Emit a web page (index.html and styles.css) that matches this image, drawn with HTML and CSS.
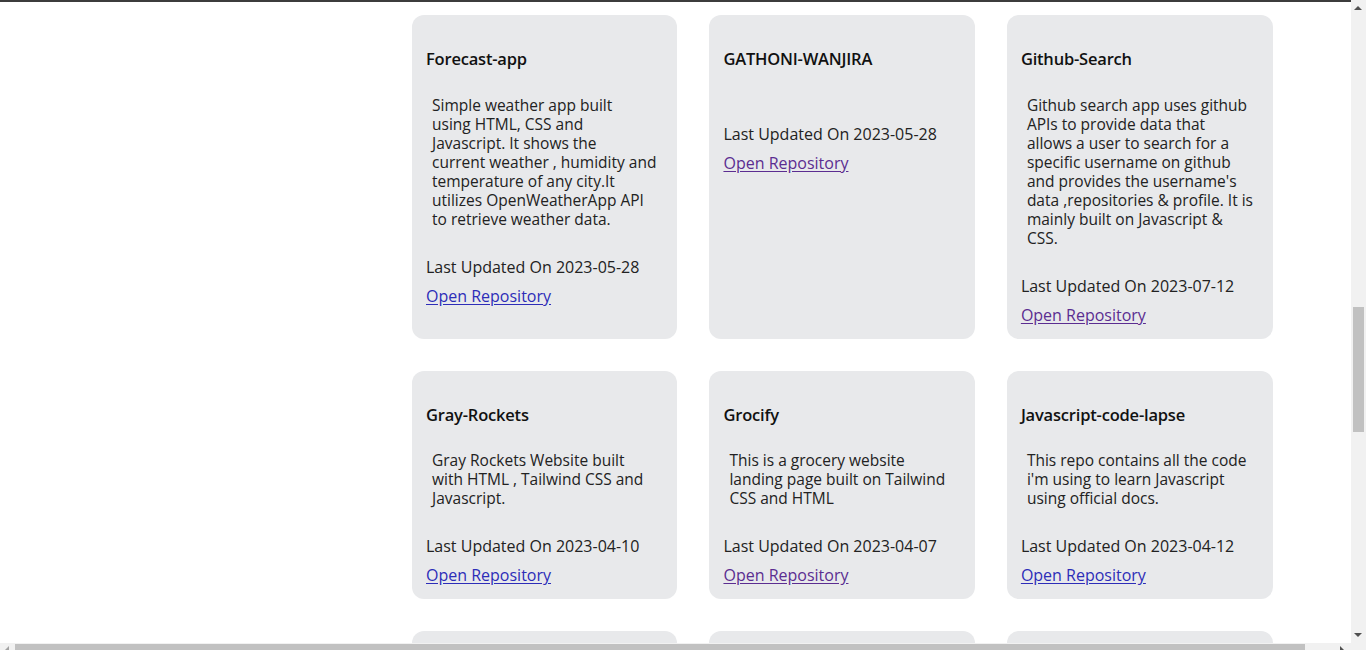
FILE: index.html
```html
<!DOCTYPE html>
<html lang="en">
<head>
<meta charset="utf-8">
<title>Repositories</title>
<link rel="stylesheet" href="styles.css">
</head>
<body>
<div class="page">
  <div class="topbar"></div>
  <div class="layout">
    <aside class="side"></aside>
    <main class="repos">
      <article class="card">
        <h3 class="title">Forecast-app</h3>
        <p class="desc">Simple weather app built<br>using HTML, CSS and<br>Javascript. It shows the<br>current weather , humidity and<br>temperature of any city.It<br>utilizes OpenWeatherApp API<br>to retrieve weather data.</p>
        <p class="updated">Last Updated On 2023-05-28</p>
        <a class="link" href="#">Open Repository</a>
      </article>
      <article class="card">
        <h3 class="title">GATHONI-WANJIRA</h3>
        <p class="desc"></p>
        <p class="updated">Last Updated On 2023-05-28</p>
        <a class="link visited" href="#">Open Repository</a>
      </article>
      <article class="card">
        <h3 class="title">Github-Search</h3>
        <p class="desc">Github search app uses github<br>APIs to provide data that<br>allows a user to search for a<br>specific username on github<br>and provides the username's<br>data ,repositories &amp; profile. It is<br>mainly built on Javascript &amp;<br>CSS.</p>
        <p class="updated">Last Updated On 2023-07-12</p>
        <a class="link visited" href="#">Open Repository</a>
      </article>
      <article class="card">
        <h3 class="title">Gray-Rockets</h3>
        <p class="desc">Gray Rockets Website built<br>with HTML , Tailwind CSS and<br>Javascript.</p>
        <p class="updated">Last Updated On 2023-04-10</p>
        <a class="link" href="#">Open Repository</a>
      </article>
      <article class="card">
        <h3 class="title">Grocify</h3>
        <p class="desc">This is a grocery website<br>landing page built on Tailwind<br>CSS and HTML</p>
        <p class="updated">Last Updated On 2023-04-07</p>
        <a class="link visited" href="#">Open Repository</a>
      </article>
      <article class="card">
        <h3 class="title">Javascript-code-lapse</h3>
        <p class="desc">This repo contains all the code<br>i'm using to learn Javascript<br>using official docs.</p>
        <p class="updated">Last Updated On 2023-04-12</p>
        <a class="link" href="#">Open Repository</a>
      </article>
      <article class="card card-stub"></article>
      <article class="card card-stub"></article>
      <article class="card card-stub"></article>
    </main>
  </div>
</div>
<div class="vscroll">
  <span class="arrow up"></span>
  <span class="vthumb"></span>
  <span class="arrow down"></span>
</div>
<div class="hscroll">
  <span class="arrow left"></span>
  <span class="hthumb"></span>
  <span class="arrow right"></span>
</div>
</body>
</html>
```
FILE: styles.css
```css
html, body {
  margin: 0;
  padding: 0;
  height: 650px;
  overflow: hidden;
  background: #ffffff;
}
body {
  font-family: "Open Sans", "Liberation Sans", sans-serif;
  color: #222222;
}
.page {
  width: 1351px;
}
.topbar {
  height: 2px;
  background: #3c3c3c;
}
.layout {
  display: flex;
  padding-top: 13px;
}
.side {
  width: 412px;
  flex: none;
}
.repos {
  width: 861px;
  display: grid;
  grid-template-columns: repeat(3, 1fr);
  column-gap: 32px;
  row-gap: 32px;
}
.card {
  background: #e8e9eb;
  border-radius: 12px;
  padding: 34px 14px 14px;
  display: flex;
  flex-direction: column;
  align-items: flex-start;
}
.card-stub {
  height: 120px;
}
.title {
  margin: 0;
  font-size: 16.5px;
  line-height: 20px;
  font-weight: 600;
  color: #111111;
  letter-spacing: -0.2px;
}
.desc {
  margin: 26.5px 0 29px;
  padding: 0 6px;
  font-size: 15.5px;
  line-height: 19px;
  white-space: nowrap;
  color: #222222;
}
.updated {
  margin: 0 0 10px;
  font-size: 16px;
  line-height: 19px;
  color: #222222;
}
.link {
  font-size: 16px;
  line-height: 19px;
  color: #2d2db8;
  text-underline-offset: 2px;
}
.link.visited {
  color: #5b2d91;
}
.vscroll {
  position: fixed;
  top: 0;
  right: 0;
  width: 15px;
  height: 643px;
  background: #f1f1f1;
}
.vthumb {
  position: absolute;
  left: 2px;
  top: 307px;
  width: 11px;
  height: 125px;
  background: #c1c1c1;
}
.hscroll {
  position: fixed;
  left: 0;
  bottom: 0;
  width: 1366px;
  height: 7px;
  background: #f1f1f1;
}
.hthumb {
  position: absolute;
  left: 15px;
  top: 1px;
  width: 1290px;
  height: 6px;
  background: #c1c1c1;
}
.arrow {
  position: absolute;
  width: 0;
  height: 0;
  border: 4px solid transparent;
}
.arrow.up {
  left: 3px;
  top: 6px;
  border-bottom: 4px solid #505050;
  border-top: 0;
}
.arrow.down {
  left: 3px;
  bottom: 6px;
  border-top: 4px solid #505050;
  border-bottom: 0;
}
.arrow.left {
  left: 5px;
  top: 3px;
  border-right: 4px solid #a3a3a3;
  border-left: 0;
}
.arrow.right {
  left: 1340px;
  top: 3px;
  border-left: 4px solid #505050;
  border-right: 0;
}
```
